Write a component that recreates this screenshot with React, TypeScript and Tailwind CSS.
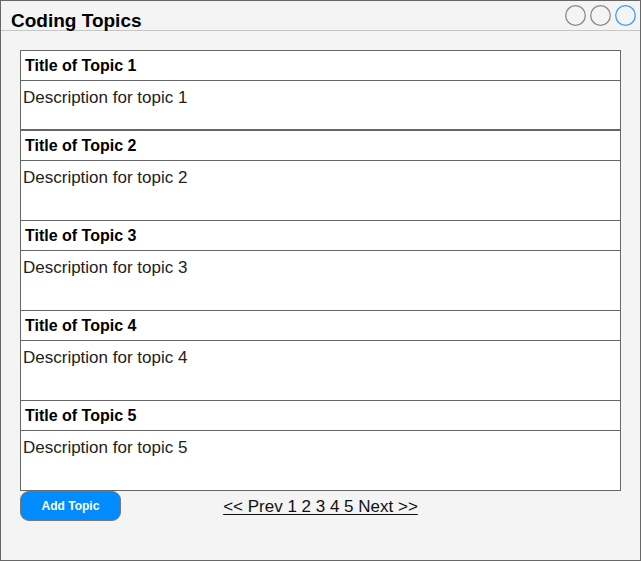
const topics = [1, 2, 3, 4, 5]

function WindowButtons() {
  return (
    <div className="flex gap-[4px] pt-[4px] pr-[4px]">
      {['#8a8a8a', '#8a8a8a', '#3d9cff'].map((c, i) => (
        <svg key={i} width="21" height="21" viewBox="0 0 21 21">
          <circle cx="10.5" cy="10.5" r="9.8" fill="none" stroke={c} strokeWidth="1.3" />
        </svg>
      ))}
    </div>
  )
}

function Topic({ n, last }: { n: number; last: boolean }) {
  const descCls =
    n === 1
      ? 'h-[50px] border-b-2 border-[#666]'
      : last
        ? 'h-[59px]'
        : 'h-[60px] border-b border-[#666]'
  return (
    <div>
      <div className="h-[30px] border-b border-[#666] flex items-center pl-1 text-[16px] font-bold text-black">
        Title of Topic {n}
      </div>
      <div className={`${descCls} pl-[2px] pt-[4px] text-[17px] text-[#222]`}>
        Description for topic {n}
      </div>
    </div>
  )
}

export default function App() {
  return (
    <div
      className="w-[641px] h-[561px] border border-[#666] bg-[#f4f4f4] flex flex-col"
      style={{ fontFamily: '"Liberation Sans", Arial, sans-serif' }}
    >
      <header className="h-[30px] shrink-0 border-b border-[#c6c6c6] flex justify-between">
        <h1 className="pl-[10px] pt-[6px] text-[19px] font-bold leading-normal text-black">Coding Topics</h1>
        <WindowButtons />
      </header>

      <div className="pl-[19px] pt-[19px] w-[620px]">
        <div className="h-[441px] border border-[#666] bg-white">
          {topics.map((n) => (
            <Topic key={n} n={n} last={n === 5} />
          ))}
        </div>

        <div className="grid grid-cols-[1fr_auto_1fr] items-center">
          <div>
            <button className="w-[101px] h-[30px] rounded-[9px] border border-[#777] bg-[#008cff] text-white text-[12px] font-bold">
              Add Topic
            </button>
          </div>
          <a className="text-[17px] text-[#111] underline underline-offset-2 leading-none">
            &lt;&lt; Prev 1 2 3 4 5 Next &gt;&gt;
          </a>
          <div />
        </div>
      </div>
    </div>
  )
}
